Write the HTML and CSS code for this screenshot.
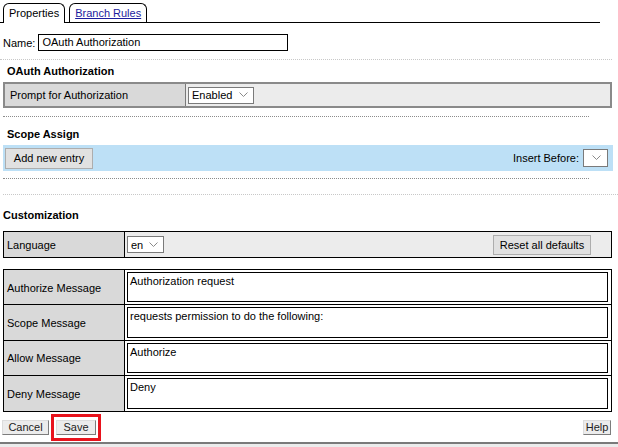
FILE: index.html
```html
<!DOCTYPE html>
<html>
<head>
<meta charset="utf-8">
<link rel="stylesheet" href="styles.css">
</head>
<body>
  <div class="tabs">
    <div class="tab active">Properties</div>
    <div class="tab"><a href="#">Branch Rules</a></div>
  </div>

  <div class="name-row">
    <span>Name:</span>
    <div class="text-input">OAuth Authorization</div>
  </div>

  <div class="rule light wide"></div>
  <h2 class="section indent">OAuth Authorization</h2>
  <div class="kv prompt">
    <div class="kv-label">Prompt for Authorization</div>
    <div class="kv-value">
      <div class="select sel-enabled"><span>Enabled</span><svg width="9" height="6" viewBox="0 0 9 6"><polyline points="0.5,0.5 4.5,4.5 8.5,0.5" fill="none" stroke="#8a8a8a" stroke-width="1"/></svg></div>
    </div>
  </div>

  <div class="rule dark"></div>
  <h2 class="section indent scope-title">Scope Assign</h2>
  <div class="bar">
    <button class="btn win add">Add new entry</button>
    <div class="insert">
      <span>Insert Before:</span>
      <div class="select sel-empty"><svg width="9" height="6" viewBox="0 0 9 6"><polyline points="0.5,0.5 4.5,4.5 8.5,0.5" fill="none" stroke="#8a8a8a" stroke-width="1"/></svg></div>
    </div>
  </div>
  <div class="rule dark after-bar"></div>
  <div class="rule light wide after-dark"></div>

  <h2 class="section custom-title">Customization</h2>
  <div class="kv lang">
    <div class="kv-label">Language</div>
    <div class="kv-value spread">
      <div class="select sel-en"><span>en</span><svg width="9" height="6" viewBox="0 0 9 6"><polyline points="0.5,0.5 4.5,4.5 8.5,0.5" fill="none" stroke="#8a8a8a" stroke-width="1"/></svg></div>
      <button class="btn win reset">Reset all defaults</button>
    </div>
  </div>

  <div class="msgs">
    <div class="m-label">Authorize Message</div>
    <div class="m-value"><div class="textarea">Authorization request</div></div>
    <div class="m-label">Scope Message</div>
    <div class="m-value"><div class="textarea">requests permission to do the following:</div></div>
    <div class="m-label">Allow Message</div>
    <div class="m-value"><div class="textarea">Authorize</div></div>
    <div class="m-label last">Deny Message</div>
    <div class="m-value last"><div class="textarea">Deny</div></div>
  </div>

  <div class="actions">
    <div class="left-actions">
      <button class="btn classic cancel">Cancel</button>
      <div class="highlight"><button class="btn classic">Save</button></div>
    </div>
    <button class="btn classic help">Help</button>
  </div>

  <div class="footer"></div>
</body>
</html>
```

FILE: styles.css
```css
* { box-sizing: border-box; }
html, body { margin: 0; padding: 0; background: #fff; }
body {
  font-family: "Liberation Sans", Arial, sans-serif;
  font-size: 11px;
  color: #000;
  width: 618px;
  height: 447px;
  overflow: hidden;
  display: flex;
  flex-direction: column;
}

/* tabs */
.tabs {
  display: flex;
  gap: 4px;
  padding: 3px 0 0 3px;
  width: 600px;
  height: 23px;
  border-bottom: 1px solid #000;
  flex-shrink: 0;
}
.tab {
  border: 1px solid #000;
  border-bottom: none;
  border-radius: 6px 6px 0 0;
  padding: 0 5px;
  height: 19px;
  line-height: 18px;
  background: #fff;
}
.tab.active { height: 20px; margin-bottom: -1px; }
.tab a { color: #1c1c9e; text-decoration: underline; }

/* name */
.name-row {
  display: flex;
  align-items: center;
  gap: 3px;
  margin-top: 11px;
  padding-left: 3px;
  height: 17px;
}
.text-input {
  width: 250px;
  height: 17px;
  border: 1px solid #000;
  padding: 0 3px;
  line-height: 15px;
}

/* rules */
.rule { flex-shrink: 0; height: 0; }
.rule.light { border-top: 1px dotted #c8c8c8; }
.rule.wide { width: 612px; margin-top: 8px; }
.rule.dark { border-top: 1px dotted #8c8c8c; width: 586px; margin-left: 3px; margin-top: 8px; }
.rule.after-bar { margin-top: 7px; }
.rule.after-dark { margin-top: 15px; margin-left: 3px; width: 615px; }

/* headings */
.section {
  margin: 5px 0 0 0;
  font-size: 11px;
  font-weight: bold;
  line-height: 13px;
}
.indent { padding-left: 7px; }
.scope-title { margin-top: 11px; }
.custom-title { margin-top: 14px; padding-left: 3px; }

/* key/value rows */
.kv {
  display: grid;
  margin-left: 3px;
  width: 609px;
  flex-shrink: 0;
}
.kv-label {
  background: #d9d9d9;
  display: flex;
  align-items: center;
  padding-left: 6px;
}
.kv-value {
  background: #ececec;
  display: flex;
  align-items: center;
  padding-left: 2px;
}
.prompt {
  grid-template-columns: 181px 1fr;
  height: 26px;
  margin-top: 4px;
  border: 2px solid #8a8a8a;
}
.prompt .kv-label { border-right: 1px solid #7a7a7a; padding-left: 5px; }
.lang {
  grid-template-columns: 121px 1fr;
  height: 27px;
  margin-top: 9px;
  border: 1px solid #000;
}
.lang .kv-label { border-right: 1px solid #000; padding-left: 3px; }
.spread { justify-content: space-between; padding-right: 20px; }

/* select mimic */
.select {
  display: flex;
  align-items: center;
  justify-content: space-between;
  background: #fff;
  border: 1px solid #7a7a7a;
  padding: 0 5px 0 3px;
}
.sel-enabled { width: 66px; height: 17px; }
.sel-en { width: 37px; height: 17px; }
.sel-empty { width: 25px; height: 18px; justify-content: flex-end; padding-right: 6px; }

/* blue bar */
.bar {
  display: flex;
  align-items: center;
  justify-content: space-between;
  background: #bde0f6;
  margin: 4px 0 0 3px;
  width: 610px;
  height: 26px;
  padding: 0 5px 0 2px;
  flex-shrink: 0;
}
.insert { display: flex; align-items: center; gap: 4px; }

/* buttons */
.btn {
  font-family: inherit;
  font-size: 11px;
  color: #000;
  margin: 0;
  cursor: default;
}
.btn.win {
  background: #e1e1e1;
  border: 1px solid #adadad;
  height: 21px;
  padding: 0 6px;
}
.btn.win.add { width: 88px; padding: 0; }
.btn.win.reset { height: 20px; width: 98px; padding: 0; }
.btn.classic {
  background: #ececec;
  border: 1px solid;
  border-color: #dcdcdc #7c7c7c #7c7c7c #dcdcdc;
  height: 15px;
  padding: 0 5px;
  line-height: 13px;
  color: #222;
}
.btn.classic.cancel { width: 47px; padding: 0; }

/* messages */
.msgs {
  display: grid;
  grid-template-columns: 121px 1fr;
  grid-template-rows: repeat(4, 1fr);
  margin: 11px 0 0 3px;
  width: 609px;
  height: 143px;
  border: 1px solid #000;
  flex-shrink: 0;
}
.m-label {
  background: #d9d9d9;
  border-right: 1px solid #000;
  border-bottom: 1px solid #000;
  display: flex;
  align-items: center;
  padding: 1px 0 0 3px;
}
.m-value {
  border-bottom: 1px solid #000;
  padding: 2px 3px 2px 2px;
  background: #fff;
}
.m-label.last, .m-value.last { border-bottom: none; }
.textarea {
  height: 100%;
  border: 1px solid #000;
  padding: 1px 2px;
  line-height: 14px;
}

/* actions */
.actions {
  display: flex;
  align-items: center;
  justify-content: space-between;
  margin-top: 2px;
  height: 27px;
  padding: 0 7px 0 2px;
  flex-shrink: 0;
}
.left-actions { display: flex; align-items: center; gap: 2px; }
.highlight {
  border: 3px solid #e8121c;
  height: 27px;
  width: 50px;
  display: flex;
  align-items: center;
  justify-content: center;
}
.highlight .btn { width: 40px; padding: 0; }
.btn.classic.help { width: 28px; padding: 0; }

.footer {
  margin-top: auto;
  height: 5px;
  border-top: 2px solid #7a7a7a;
  background: #ececec;
  flex-shrink: 0;
}
```
